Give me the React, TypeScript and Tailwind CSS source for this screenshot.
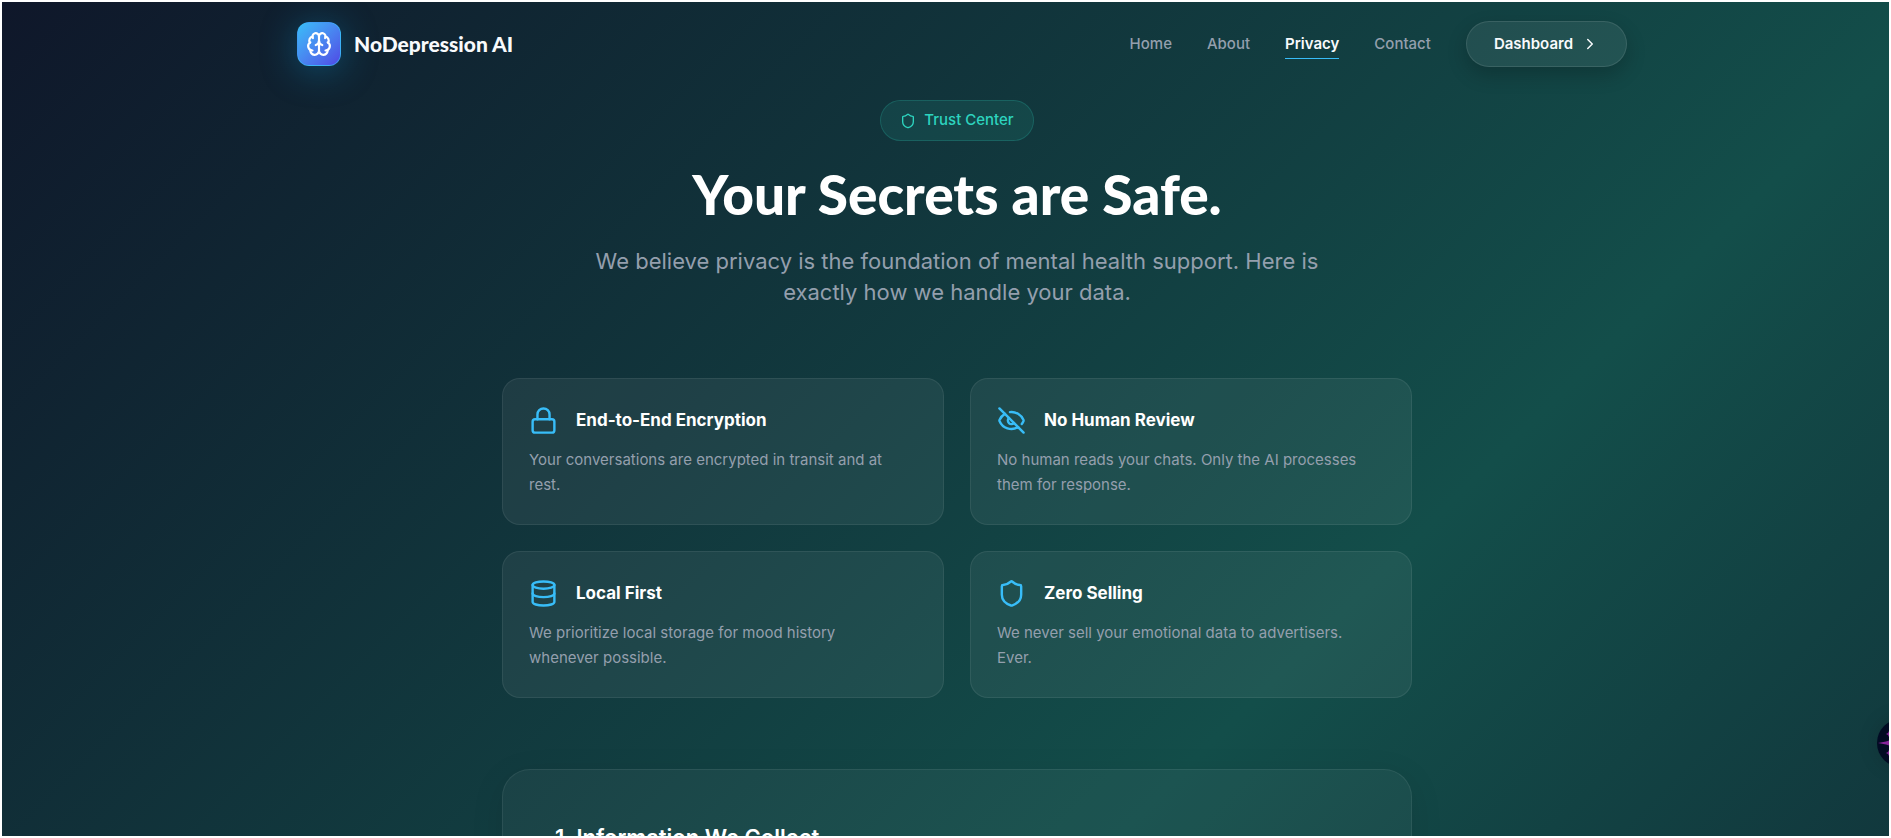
import { Brain, ChevronRight, Database, EyeOff, Lock, Shield } from "lucide-react";
import type { LucideIcon } from "lucide-react";
import clsx from "clsx";

interface Feature {
  icon: LucideIcon;
  title: string;
  text: string;
}

const navLinks = ["Home", "About", "Privacy", "Contact"];

const features: Feature[] = [
  {
    icon: Lock,
    title: "End-to-End Encryption",
    text: "Your conversations are encrypted in transit and at rest.",
  },
  {
    icon: EyeOff,
    title: "No Human Review",
    text: "No human reads your chats. Only the AI processes them for response.",
  },
  {
    icon: Database,
    title: "Local First",
    text: "We prioritize local storage for mood history whenever possible.",
  },
  {
    icon: Shield,
    title: "Zero Selling",
    text: "We never sell your emotional data to advertisers. Ever.",
  },
];

function Navbar() {
  return (
    <header className="pl-[33px]">
      <div className="mx-auto flex h-[84px] max-w-[1330px] items-center justify-between">
        <a href="#" className="flex items-center gap-[13px]">
          <span className="flex size-11 items-center justify-center rounded-xl border border-[#38bdf8]/60 bg-linear-135 from-[#38bdf8] to-[#4f46e5] shadow-[0_4px_36px_rgba(14,165,233,0.35)]">
            <Brain className="size-[26px] text-white" />
          </span>
          <span className="font-['Lato_Black',Lato,sans-serif] text-[21px] font-black text-slate-50">
            NoDepression AI
          </span>
        </a>

        <nav className="flex items-center gap-[35px] text-[15px] font-medium">
          {navLinks.map((link) => (
            <a
              key={link}
              href="#"
              className={clsx(
                "border-b pt-1 pb-[2px]",
                link === "Privacy"
                  ? "border-[#38bdf8] font-semibold text-slate-50"
                  : "border-transparent text-[#949fad]"
              )}
            >
              {link}
            </a>
          ))}
          <button className="flex h-[46px] items-center gap-2 rounded-full border border-white/10 bg-white/7 px-[27px] font-semibold text-slate-50 shadow-[0_8px_20px_rgba(0,0,0,0.2)]">
            Dashboard
            <ChevronRight className="size-[18px]" />
          </button>
        </nav>
      </div>
    </header>
  );
}

function FeatureCard({ icon: Icon, title, text }: Feature) {
  return (
    <article className="min-h-[147px] rounded-[18px] border border-white/7 bg-white/6 px-[26px] pt-[27px] pb-6">
      <div className="flex items-center gap-[18px]">
        <Icon className="size-[29px] shrink-0 text-[#38bdf8]" />
        <h3 className="text-[17px] font-bold text-white">{title}</h3>
      </div>
      <p className="mt-3 pr-4 text-[15px] leading-[25px] text-[#949fad]">{text}</p>
    </article>
  );
}

// Floating assistant bubble, tucked into the right edge
function AssistantBubble() {
  return (
    <button
      aria-label="Open assistant"
      className="absolute top-[717px] -right-9 size-12 rounded-full bg-[#020b23] shadow-[0_0_20px_rgba(0,0,0,0.15)]"
    >
      <svg viewBox="0 0 48 48" className="size-12" fill="#86249a">
        <path d="M1 24L9 22.5Q20 20 24 6Q28 20 39 22.5L47 24L39 25.5Q28 28 24 42Q20 28 9 25.5Z" />
        <path d="M9 15l2-1 1-2 1 2 2 1-2 1-1 2-1-2zM9 34l2-1 1-2 1 2 2 1-2 1-1 2-1-2z" />
      </svg>
    </button>
  );
}

export default function App() {
  return (
    <div className="relative h-screen overflow-hidden border-2 border-white bg-[linear-gradient(135deg,#0f172a_0px,#134e4a_1379px,#0f172a_2758px)] font-[Inter,sans-serif]">
      <Navbar />

      <main className="pl-[23px]">
        <div className="mx-auto max-w-[910px] pt-[14px]">
          <section className="flex flex-col items-center text-center">
            <span className="flex h-[41px] items-center gap-2 rounded-full border border-[#2dd4bf]/20 bg-[#2dd4bf]/10 px-[19px] text-[15px] font-medium text-[#2dd4bf]">
              <Shield className="size-4" />
              Trust Center
            </span>
            <h1 className="mt-5 font-['Lato_Black',Lato,sans-serif] text-[55px] leading-[66px] font-black text-white">
              Your Secrets are Safe.
            </h1>
            <p className="mt-[19px] max-w-[750px] text-[22px] leading-[31px] text-[#949fad]">
              We believe privacy is the foundation of mental health support. Here is exactly how we
              handle your data.
            </p>
          </section>

          <section className="mt-[70px] grid grid-cols-2 gap-[26px]">
            {features.map((feature) => (
              <FeatureCard key={feature.title} {...feature} />
            ))}
          </section>

          <section className="mt-[71px] rounded-[28px] border border-white/7 bg-white/4 px-[52px] py-[51px] shadow-[0_8px_32px_rgba(0,0,0,0.1)]">
            <h2 className="text-[22px] leading-[33px] font-semibold text-white">
              1. Information We Collect
            </h2>
          </section>
        </div>
      </main>

      <AssistantBubble />
    </div>
  );
}
